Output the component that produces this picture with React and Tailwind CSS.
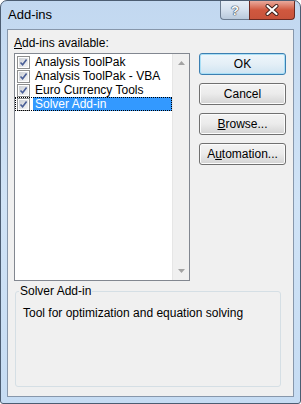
import React from "react";

const font = { fontFamily: '"Liberation Sans", Arial, sans-serif' };

function CheckBox() {
  return (
    <div className="w-[13px] h-[13px] border border-[#8e8f8f] bg-white p-[1px] shrink-0">
      <div className="w-full h-full bg-gradient-to-br from-[#cbcfd5] to-[#f6f6f6] relative">
        <svg viewBox="0 0 9 9" className="absolute inset-0 w-[9px] h-[9px]">
          <path d="M1.5 4.5 L3.6 6.8 L7.6 1.4" fill="none" stroke="#4a5f97" strokeWidth="1.6" />
        </svg>
      </div>
    </div>
  );
}

function Row({ label, selected }) {
  return (
    <div
      className={
        "h-[14px] flex items-center pl-[2px] " +
        (selected ? "outline outline-1 outline-dotted outline-black -outline-offset-1" : "")
      }
    >
      <CheckBox />
      <div
        className={
          "ml-[3px] h-[14px] flex-1 flex items-center pl-[2px] text-[12px] leading-[14px] " +
          (selected ? "bg-[#3399ff] text-white" : "text-black")
        }
      >
        {label}
      </div>
    </div>
  );
}

function Btn({ children, def }) {
  return (
    <div
      className={
        "w-[87px] h-[22px] rounded-[3px] border flex items-center justify-center text-[12px] text-black " +
        (def
          ? "border-[#3c7fb1] bg-gradient-to-b from-[#eef6fb] via-[#e4eff7] to-[#cfe4f2] shadow-[inset_0_0_0_1px_#a9dff6]"
          : "border-[#707070] bg-gradient-to-b from-[#f3f3f3] via-[#ebebeb] to-[#d3d3d3] shadow-[inset_0_0_0_1px_#fcfcfc]")
      }
    >
      {children}
    </div>
  );
}

export default function App() {
  return (
    <div style={font} className="w-[301px] h-[404px] bg-white">
      <div className="w-[301px] h-[404px] border border-[#4c5d72] rounded-t-[7px] rounded-b-[3px] bg-gradient-to-b from-[#c2d8f0] via-[#d0e3f6] to-[#c6dcf3] flex flex-col px-[6px] pb-[6px] overflow-hidden">
        <div className="h-[28px] flex items-start justify-between shrink-0">
          <div className="pt-[6px] pl-[1px] text-[13px] text-black leading-[16px]">Add-ins</div>
          <div className="flex -mr-[1px]">
            <div className="w-[29px] h-[19px] border border-[#6b7c91] border-t-0 border-r-0 rounded-bl-[4px] bg-gradient-to-b from-[#e6eef7] via-[#d4e0ee] to-[#b9c9dc] flex items-center justify-center">
              <span className="text-[13px] font-bold text-white leading-none" style={{ textShadow: "0 0 1px #2f3b4c, 0 0 1px #2f3b4c, 0 0 1px #2f3b4c" }}>?</span>
            </div>
            <div className="w-[46px] h-[19px] border border-[#6b2a22] border-t-0 rounded-br-[4px] bg-gradient-to-b from-[#e9a99c] via-[#d0583f] to-[#c8533b] flex items-center justify-center">
              <svg viewBox="0 0 14 12" className="w-[14px] h-[12px]">
                <path d="M2.5 2 L11.5 10 M11.5 2 L2.5 10" stroke="#3a1e1a" strokeWidth="4" strokeLinecap="round" />
                <path d="M2.5 2 L11.5 10 M11.5 2 L2.5 10" stroke="#ffffff" strokeWidth="2.2" strokeLinecap="round" />
              </svg>
            </div>
          </div>
        </div>
        <div className="flex-1 border border-[#8797ab] bg-[#f0f0f0] flex flex-col px-[6px] pb-[9px]">
          <div className="h-[23px] pt-[5px] text-[12px] leading-[16px] text-black">
            <span className="underline">A</span>dd-ins available:
          </div>
          <div className="flex gap-[9px]">
            <div className="w-[176px] h-[228px] border border-[#828790] bg-white flex">
              <div className="flex-1 pt-[1px] flex flex-col">
                <Row label="Analysis ToolPak" />
                <Row label="Analysis ToolPak - VBA" />
                <Row label="Euro Currency Tools" />
                <Row label="Solver Add-in" selected />
              </div>
              <div className="w-[17px] bg-[#f0f0f0] border-l border-[#e6e6e6] flex flex-col justify-between items-center py-[7px]">
                <svg viewBox="0 0 7 4" className="w-[7px] h-[4px]">
                  <path d="M3.5 0 L7 4 L0 4 Z" fill="#a3a3a3" />
                </svg>
                <svg viewBox="0 0 7 4" className="w-[7px] h-[4px]">
                  <path d="M0 0 L7 0 L3.5 4 Z" fill="#a3a3a3" />
                </svg>
              </div>
            </div>
            <div className="flex flex-col gap-[8px]">
              <Btn def>OK</Btn>
              <Btn>Cancel</Btn>
              <Btn>
                <span><span className="underline">B</span>rowse...</span>
              </Btn>
              <Btn>
                <span>A<span className="underline">u</span>tomation...</span>
              </Btn>
            </div>
          </div>
          <div className="relative mt-[10px] ml-[1px] mr-[6px] flex-1 border border-[#d5dfe5] rounded-[3px]">
            <div className="absolute -top-[9px] left-[3px] bg-[#f0f0f0] px-[1px] text-[12px] leading-[16px] text-black">
              Solver Add-in
            </div>
            <div className="pt-[13px] pl-[7px] text-[12px] leading-[16px] text-black">
              Tool for optimization and equation solving
            </div>
          </div>
        </div>
      </div>
    </div>
  );
}
